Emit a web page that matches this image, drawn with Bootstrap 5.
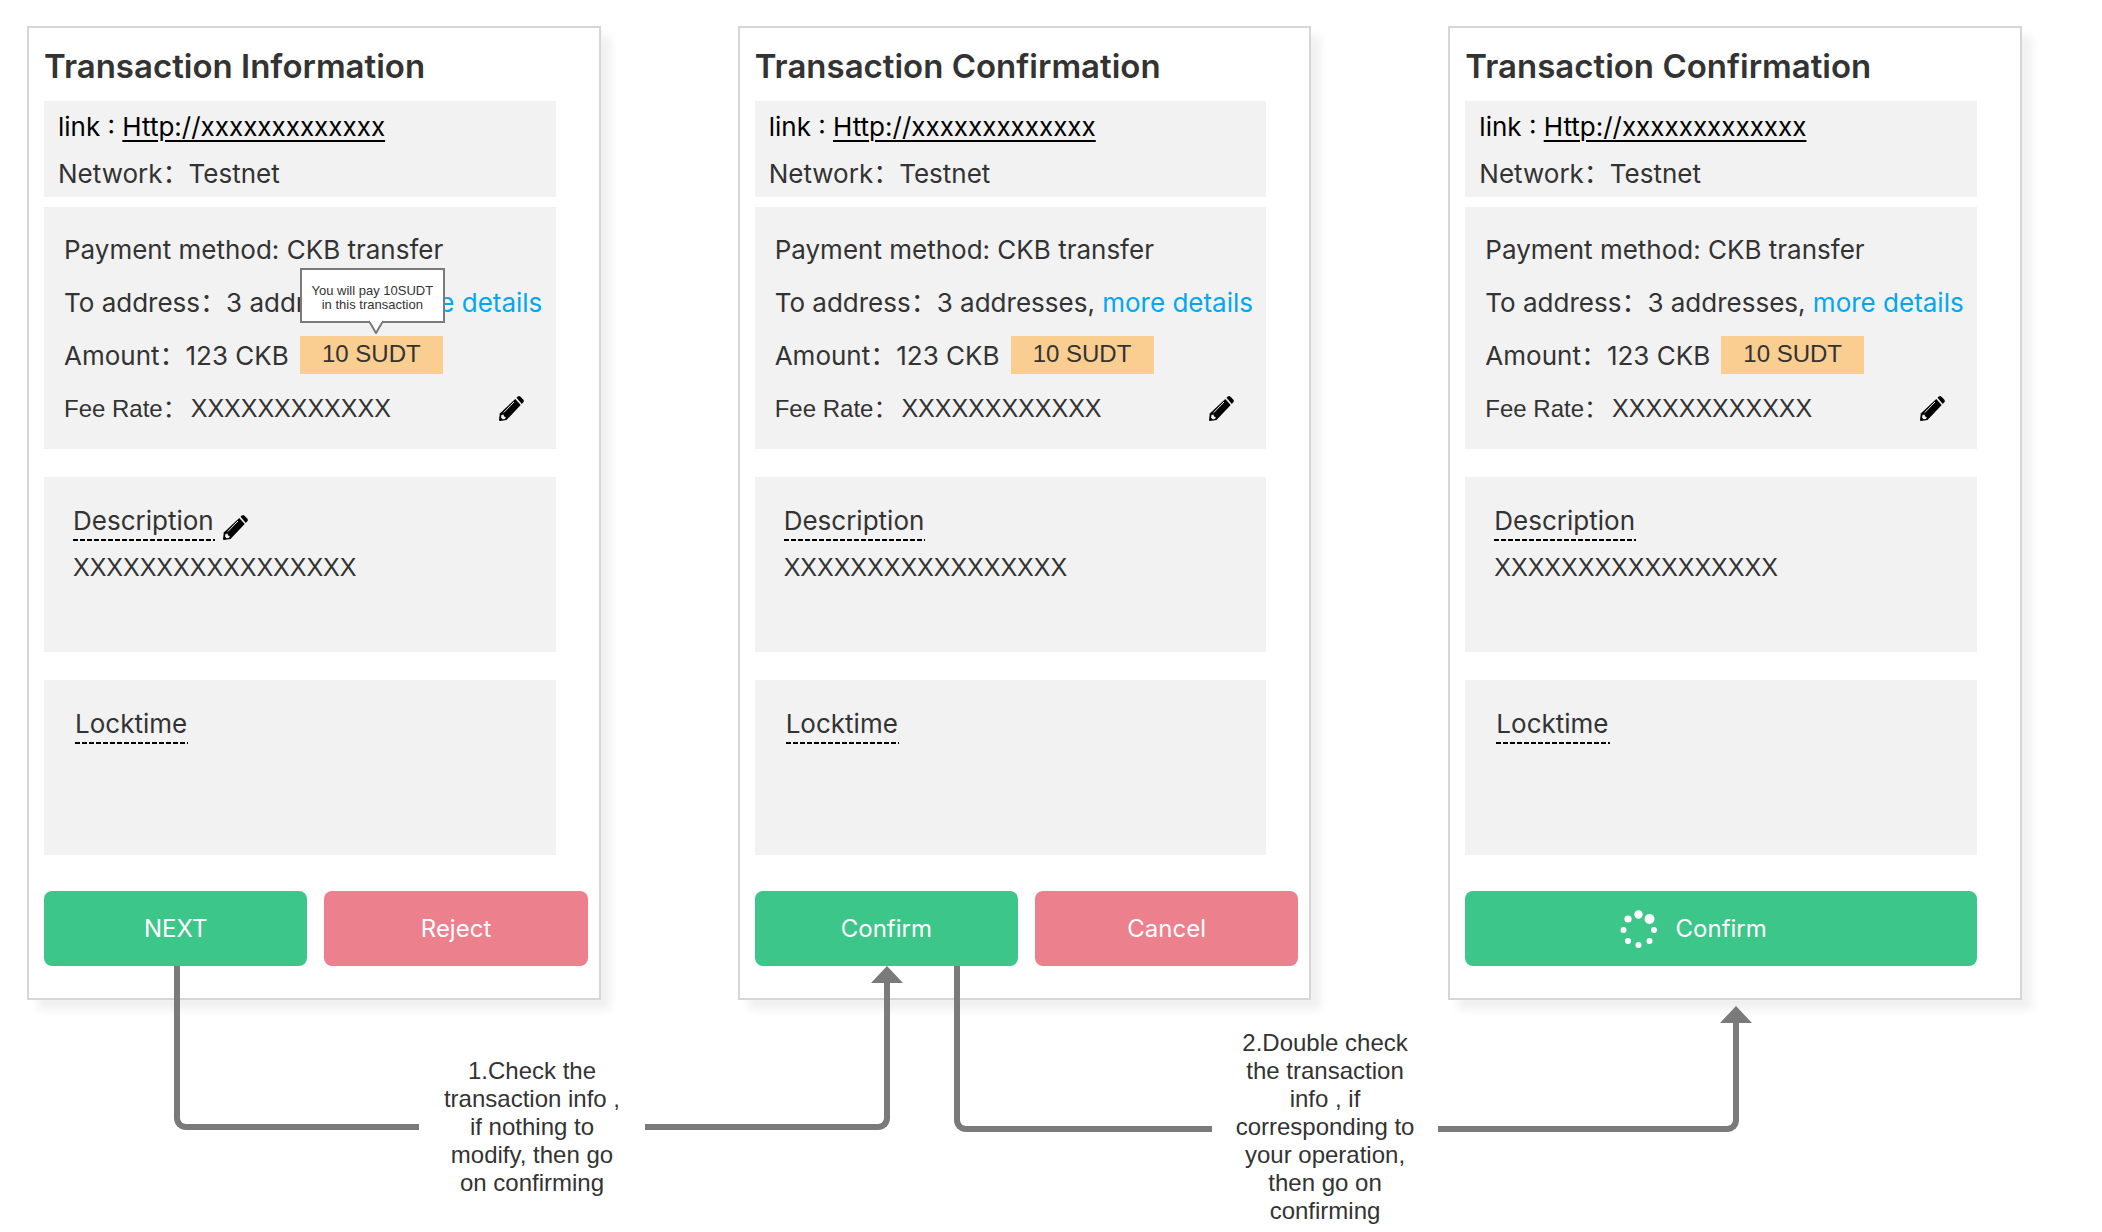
<!DOCTYPE html>
<html lang="en">
<head>
<meta charset="utf-8">
<meta name="viewport" content="width=device-width, initial-scale=1">
<title>Transaction flow</title>
<link href="https://cdn.jsdelivr.net/npm/bootstrap@5.3.0/dist/css/bootstrap.min.css" rel="stylesheet">
<style>
  body { background: #fff; color: #333; font-family: Inter, "Noto Sans CJK SC", sans-serif; font-size: 26px; }
  .flow { padding: 26px 80px 0 27px; }
  .screens { gap: 137px; }
  .screen { flex: 1 1 0; min-width: 0; border: 2px solid #d6d6d6; background: #fff; padding: 0 11px 32px 15px; box-shadow: 10px 10px 8px rgba(0,0,0,.06); }
  .screen-title { font-size: 33px; font-weight: 600; line-height: 45px; padding: 16px 0 12px; margin: 0; }
  .panel { background: #f2f2f2; margin-right: 32px; white-space: nowrap; }
  .panel-source { padding: 2px 14px 0; line-height: 47px; margin-bottom: 10px; }
  .panel-source a { color: #000; text-underline-offset: 4px; text-decoration-thickness: 2px; }
  .panel-payment { padding: 16px 10px 14px 20px; line-height: 53px; margin-bottom: 28px; }
  .panel-payment a { color: #02a7f0; text-decoration: none; }
  .line { height: 53px; }
  .line-fee { padding-right: 22px; }
  .fee-label { font-family: "Liberation Sans", "Noto Sans CJK SC", sans-serif; font-size: 24px; margin-right: 4px; }
  .filler { font-family: "Liberation Sans", sans-serif; font-size: 25px; }
  .token { position: relative; width: 143px; height: 38px; line-height: 36px; margin: 0 0 2px 11px; background: #facd91; font-family: "Liberation Sans", sans-serif; font-size: 24px; text-align: center; }
  .hint { position: absolute; left: 0; bottom: 51px; width: 145px; height: 55px; padding-top: 14px; border: 2px solid #7a7a7a; background: #fff; font-size: 13px; line-height: 14px; z-index: 2; }
  .hint svg { position: absolute; left: 66px; top: 50px; }
  .edit { border: 0; padding: 0; background: none; line-height: 0; }
  .panel-note { min-height: 175px; padding: 21px 30px 0 29px; margin-bottom: 28px; line-height: 46px; }
  .panel-lock { padding-left: 31px; }
  .note-label { height: 43px; margin-bottom: 3px; padding-right: 1px; background: repeating-linear-gradient(90deg, #000 0 5px, transparent 5px 7px) left bottom / 100% 2px no-repeat; }
  .actions { margin-top: 36px; gap: 17px; }
  .action { flex: 1 1 0; height: 75px; border: 0; border-radius: 8px; color: #fff; font-size: 24px; }
  .go { background: #3dc68a; }
  .stop { background: #ec808d; }
  .busy { display: grid; grid-template-columns: 1fr auto 1fr; align-items: center; column-gap: 18px; margin-right: 32px; }
  .busy svg { justify-self: end; }
  .links { margin: -34px 283px 0 147px; gap: 64px; position: relative; }
  .link-a { flex: 716 1 0; }
  .link-b { flex: 785 1 0; }
  .leg { flex: 1 1 0; height: 164px; border: 0 solid #7a7a7a; border-bottom-width: 6px; position: relative; }
  .leg-out { border-left-width: 6px; border-bottom-left-radius: 12px; }
  .leg-in { border-right-width: 6px; border-bottom-right-radius: 12px; margin-top: 12px; height: 152px; }
  .leg-in::before { content: ""; position: absolute; right: -19px; top: -12px; width: 32px; height: 17px; background: #7a7a7a; clip-path: polygon(50% 0, 100% 100%, 0 100%); }
  .link-b .leg { height: 166px; }
  .link-b .leg-out { flex-grow: 258; }
  .link-b .leg-in { flex-grow: 302; margin-top: 52px; height: 114px; }
  .caption-text { flex: 0 0 226px; padding: 91px 20px 0; margin: 0; font-family: "Liberation Sans", sans-serif; font-size: 24px; line-height: 28px; text-align: center; }
  .link-b .caption-text { padding-top: 63px; }
</style>
</head>
<body>
<svg class="d-none">
  <symbol id="pencil" viewBox="0 0 25 25">
    <path d="M17.500 1.800 L19 .5 Q20.300 -.4 21.500 .8 L24.200 3.600 Q25.400 5 24.300 6.300 L22.800 8 Z"/>
    <path d="M16.300 3 L21.700 9 L7.500 24 L1 25 Q0 25 0 24 L.8 17.500 Z"/>
    <path d="M4.800 16.500 L15 6" stroke="#f2f2f2" stroke-width="1" fill="none"/>
    <path d="M2.500 19 L4.500 18.500 L5 20.500 L6.800 21 L6 23 L3.500 23.200 L2 21.500 Z" fill="#f2f2f2"/>
  </symbol>
</svg>
<main class="flow">
  <div class="screens d-flex">
    <section class="screen">
      <h1 class="screen-title">Transaction Information</h1>
      <div class="panel panel-source">
        <div class="text-black">link : <a href="#">Http://xxxxxxxxxxxxx</a></div>
        <div>Network：Testnet</div>
      </div>
      <div class="panel panel-payment">
        <div class="line">Payment method: CKB transfer</div>
        <div class="line">To address：3 addresses, <a href="#">more details</a></div>
        <div class="line d-flex align-items-center">Amount：123 CKB
          <div class="token">10 SUDT
            <div class="hint" role="tooltip">You will pay 10SUDT<br>in this transaction
              <svg width="16" height="14"><path d="M1 1 L8 13 L15 1" fill="#fff" stroke="#7a7a7a" stroke-width="2"/><path d="M2 0H14V2H2Z" fill="#fff"/></svg>
            </div>
          </div>
        </div>
        <div class="line line-fee d-flex align-items-center"><span class="fee-label">Fee Rate：</span><span class="filler">XXXXXXXXXXXX</span>
          <button class="edit ms-auto" aria-label="Edit fee rate"><svg width="25" height="25"><use href="#pencil"/></svg></button></div>
      </div>
      <div class="panel panel-note">
        <div class="d-flex"><div class="note-label">Description</div>
          <button class="edit align-self-end ms-2 pb-1" aria-label="Edit description"><svg width="25" height="25"><use href="#pencil"/></svg></button></div>
        <div class="filler">XXXXXXXXXXXXXXXXX</div>
      </div>
      <div class="panel panel-note panel-lock mb-0">
        <div class="d-flex"><div class="note-label">Locktime</div></div>
      </div>
      <div class="actions d-flex">
        <button class="action go">NEXT</button>
        <button class="action stop">Reject</button>
      </div>
    </section>
    <section class="screen">
      <h1 class="screen-title">Transaction Confirmation</h1>
      <div class="panel panel-source">
        <div class="text-black">link : <a href="#">Http://xxxxxxxxxxxxx</a></div>
        <div>Network：Testnet</div>
      </div>
      <div class="panel panel-payment">
        <div class="line">Payment method: CKB transfer</div>
        <div class="line">To address：3 addresses, <a href="#">more details</a></div>
        <div class="line d-flex align-items-center">Amount：123 CKB
          <div class="token">10 SUDT</div>
        </div>
        <div class="line line-fee d-flex align-items-center"><span class="fee-label">Fee Rate：</span><span class="filler">XXXXXXXXXXXX</span>
          <button class="edit ms-auto" aria-label="Edit fee rate"><svg width="25" height="25"><use href="#pencil"/></svg></button></div>
      </div>
      <div class="panel panel-note">
        <div class="d-flex"><div class="note-label">Description</div></div>
        <div class="filler">XXXXXXXXXXXXXXXXX</div>
      </div>
      <div class="panel panel-note panel-lock mb-0">
        <div class="d-flex"><div class="note-label">Locktime</div></div>
      </div>
      <div class="actions d-flex">
        <button class="action go">Confirm</button>
        <button class="action stop">Cancel</button>
      </div>
    </section>
    <section class="screen">
      <h1 class="screen-title">Transaction Confirmation</h1>
      <div class="panel panel-source">
        <div class="text-black">link : <a href="#">Http://xxxxxxxxxxxxx</a></div>
        <div>Network：Testnet</div>
      </div>
      <div class="panel panel-payment">
        <div class="line">Payment method: CKB transfer</div>
        <div class="line">To address：3 addresses, <a href="#">more details</a></div>
        <div class="line d-flex align-items-center">Amount：123 CKB
          <div class="token">10 SUDT</div>
        </div>
        <div class="line line-fee d-flex align-items-center"><span class="fee-label">Fee Rate：</span><span class="filler">XXXXXXXXXXXX</span>
          <button class="edit ms-auto" aria-label="Edit fee rate"><svg width="25" height="25"><use href="#pencil"/></svg></button></div>
      </div>
      <div class="panel panel-note">
        <div class="d-flex"><div class="note-label">Description</div></div>
        <div class="filler">XXXXXXXXXXXXXXXXX</div>
      </div>
      <div class="panel panel-note panel-lock mb-0">
        <div class="d-flex"><div class="note-label">Locktime</div></div>
      </div>
      <div class="actions d-flex">
        <button class="action go busy"><svg width="38" height="38" viewBox="0 0 38 38" fill="#fff"><circle cx="18.500" cy="4.500" r="4.200"/><circle cx="29.500" cy="9" r="5"/><circle cx="34" cy="20" r="3"/><circle cx="29.500" cy="31" r="3"/><circle cx="18.500" cy="35" r="3"/><circle cx="8" cy="31" r="3"/><circle cx="3.500" cy="20" r="3"/><circle cx="8" cy="9" r="3.600"/></svg><span>Confirm</span></button>
      </div>
    </section>
  </div>
  <div class="links d-flex align-items-start">
    <div class="link-a d-flex align-items-start">
      <div class="leg leg-out"></div>
      <p class="caption-text">1.Check the transaction info , if nothing to modify, then go on confirming</p>
      <div class="leg leg-in"></div>
    </div>
    <div class="link-b d-flex align-items-start">
      <div class="leg leg-out"></div>
      <p class="caption-text">2.Double check the transaction info , if corresponding to your operation, then go on confirming</p>
      <div class="leg leg-in"></div>
    </div>
  </div>
</main>
<script src="https://cdn.jsdelivr.net/npm/bootstrap@5.3.0/dist/js/bootstrap.bundle.min.js"></script>
</body>
</html>
